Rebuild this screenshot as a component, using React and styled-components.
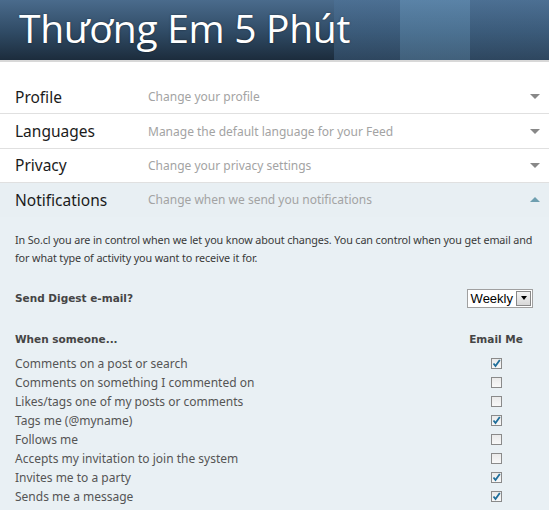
import React from "react";
import styled, { createGlobalStyle } from "styled-components";

const Global = createGlobalStyle`
  html, body { margin: 0; padding: 0; background: #fff; }
  body { font-family: "Noto Sans", "Open Sans", sans-serif; width: 549px; height: 510px; overflow: hidden; }
`;

const Header = styled.header`
  height: 60px;
  border-bottom: 2px solid #d8d8d8;
  display: flex;
  align-items: center;
  padding-left: 19px;
  background:
    linear-gradient(90deg, transparent 0, transparent 334px, rgba(80,120,160,0.35) 334px, rgba(80,120,160,0.35) 400px, rgba(110,160,200,0.45) 400px, rgba(110,160,200,0.45) 470px, rgba(80,120,160,0.35) 470px),
    linear-gradient(180deg, #4a6b8c 0%, #2f4a64 55%, #1c2c3c 100%);
`;

const Title = styled.h1`
  margin: 0;
  margin-top: -6px;
  font-family: "Open Sans", "Noto Sans", sans-serif;
  font-weight: 400;
  font-size: 39px;
  letter-spacing: -0.3px;
  color: #fff;
  text-shadow: 0 0 2px rgba(0,0,0,0.5);
`;

const List = styled.div`
  margin-top: 18px;
`;

const Row = styled.div`
  height: 33.4px;
  display: flex;
  align-items: center;
  border-top: ${p => (p.$first ? "none" : "1px solid #e0e0e0")};
  background: ${p => (p.$open ? "#e8eff3" : "#fff")};
  padding-left: 15px;
  padding-right: 9px;
`;

const RowTitle = styled.div`
  width: 133px;
  font-size: 15.5px;
  color: #1b1b1b;
`;

const RowDesc = styled.div`
  flex: 1;
  font-size: 12px;
  color: #a3a3a3;
`;

const Arrow = styled.span`
  width: 0;
  height: 0;
  border-left: 5px solid transparent;
  border-right: 5px solid transparent;
  ${p =>
    p.$up
      ? "border-bottom: 5px solid #6f9fb0;"
      : "border-top: 5px solid #888;"}
`;

const Panel = styled.section`
  background: #e9f0f4;
  padding: 14px 13px 10px 15px;
  font-size: 11.5px;
  color: #444;
`;

const Intro = styled.p`
  margin: 0;
  margin-right: -12px;
  line-height: 18px;
  font-size: 10.8px;
  letter-spacing: -0.12px;
  color: #3a3a3a;
`;

const DigestRow = styled.div`
  display: flex;
  align-items: center;
  justify-content: space-between;
  margin-top: 22px;
  padding-right: 3px;
`;

const Bold = styled.span`
  font-weight: 700;
  color: #454545;
  font-family: "DejaVu Sans", "Noto Sans", sans-serif;
  font-size: 10.5px;
`;

const Select = styled.div`
  display: flex;
  align-items: center;
  height: 17px;
  border: 1px solid #a0a0a0;
  background: #fff;
  padding-left: 3px;
  font-family: "Liberation Sans", Arial, sans-serif;
  font-size: 13px;
  color: #000;
`;

const SelectBtn = styled.span`
  width: 13px;
  height: 13px;
  margin: 0 1px 0 3px;
  border: 1px solid #888;
  background: linear-gradient(#f4f4f4, #d8d8d8);
  display: flex;
  align-items: center;
  justify-content: center;
  &::after {
    content: "";
    border-left: 3px solid transparent;
    border-right: 3px solid transparent;
    border-top: 4px solid #000;
  }
`;

const Table = styled.div`
  margin-top: 23px;
  display: grid;
  grid-template-columns: 1fr 80px;
  row-gap: 2px;
`;

const HeadCell = styled.div`
  text-align: ${p => (p.$center ? "center" : "left")};
  padding-bottom: 7px;
`;

const Cell = styled.div`
  height: 17px;
  display: flex;
  align-items: center;
  justify-content: ${p => (p.$center ? "center" : "flex-start")};
  color: #555;
  font-size: 12px;
`;

const Box = styled.span`
  width: 9px;
  height: 9px;
  border: 1px solid #8a8a8a;
  background: linear-gradient(#eaeaea, #f8f8f8);
  display: flex;
  align-items: center;
  justify-content: center;
`;

const sections = [
  ["Profile", "Change your profile"],
  ["Languages", "Manage the default language for your Feed"],
  ["Privacy", "Change your privacy settings"],
];

const items = [
  ["Comments on a post or search", true],
  ["Comments on something I commented on", false],
  ["Likes/tags one of my posts or comments", false],
  ["Tags me (@myname)", true],
  ["Follows me", false],
  ["Accepts my invitation to join the system", false],
  ["Invites me to a party", true],
  ["Sends me a message", true],
];

const Check = ({ on }) => (
  <Box>
    {on && (
      <svg width="9" height="9" viewBox="0 0 9 9">
        <path d="M1.5 4.5 L3.5 7 L7.8 1" fill="none" stroke="#1f6e9a" strokeWidth="1.8" />
      </svg>
    )}
  </Box>
);

export default function App() {
  return (
    <>
      <Global />
      <Header>
        <Title>Thương Em 5 Phút</Title>
      </Header>
      <List>
        {sections.map(([t, d], i) => (
          <Row key={t} $first={i === 0}>
            <RowTitle>{t}</RowTitle>
            <RowDesc>{d}</RowDesc>
            <Arrow />
          </Row>
        ))}
        <Row $open>
          <RowTitle>Notifications</RowTitle>
          <RowDesc>Change when we send you notifications</RowDesc>
          <Arrow $up />
        </Row>
      </List>
      <Panel>
        <Intro>
          In So.cl you are in control when we let you know about changes. You can control when you get email and for what type of activity you want to receive it for.
        </Intro>
        <DigestRow>
          <Bold>Send Digest e-mail?</Bold>
          <Select>
            Weekly
            <SelectBtn />
          </Select>
        </DigestRow>
        <Table>
          <HeadCell><Bold>When someone...</Bold></HeadCell>
          <HeadCell $center><Bold>Email Me</Bold></HeadCell>
          {items.map(([label, on]) => (
            <React.Fragment key={label}>
              <Cell>{label}</Cell>
              <Cell $center><Check on={on} /></Cell>
            </React.Fragment>
          ))}
        </Table>
      </Panel>
    </>
  );
}
